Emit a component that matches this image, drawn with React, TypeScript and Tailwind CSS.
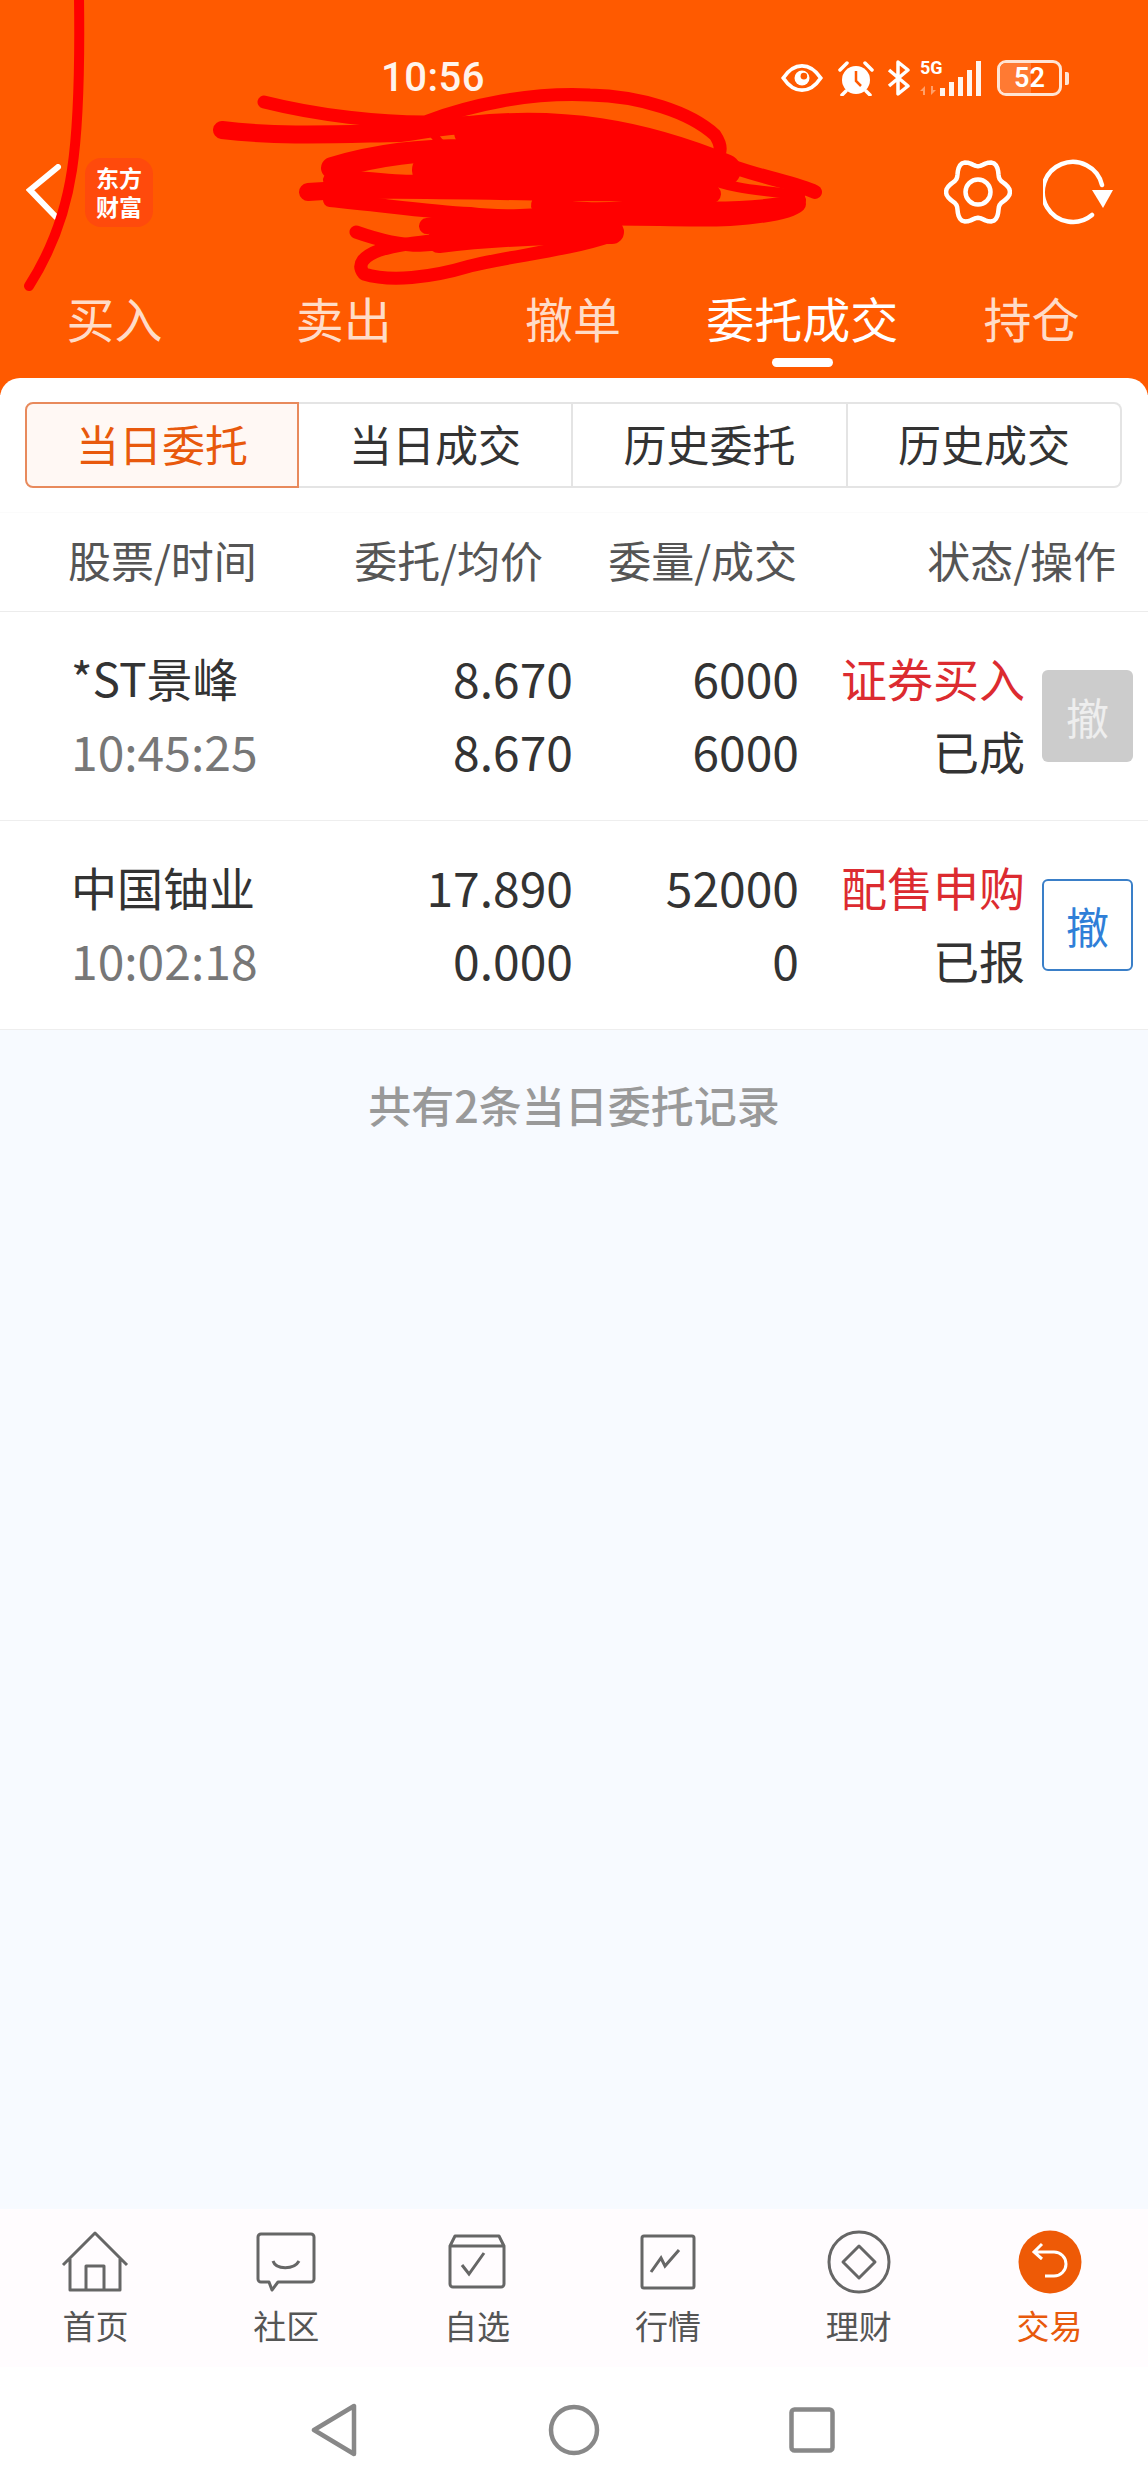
import type { ReactNode } from 'react';

const orders = [
  { name: '*ST景峰', time: '10:45:25', price: '8.670', avg: '8.670', qty: '6000', done: '6000', type: '证券买入', status: '已成', active: false },
  { name: '中国铀业', time: '10:02:18', price: '17.890', avg: '0.000', qty: '52000', done: '0', type: '配售申购', status: '已报', active: true },
];

// six lobed outline of the settings gear
const gearPath =
  Array.from({ length: 72 }, (_, i) => {
    const a = (i / 72) * Math.PI * 2;
    const r = 28.5 + 3.5 * Math.cos(6 * a);
    return `${i === 0 ? 'M' : 'L'}${(34 + r * Math.cos(a)).toFixed(2)} ${(34 - 1.03 * r * Math.sin(a)).toFixed(2)}`;
  }).join('') + 'Z';

function StatusIcons() {
  return (
    <div className="flex items-center">
      {/* eye */}
      <svg width="42" height="30" viewBox="0 0 44 32" fill="none" className="mr-[15px]">
        <path d="M2 16C8 7 15 3 22 3s14 4 20 13c-6 9-13 13-20 13S8 25 2 16Z" stroke="#fff" strokeWidth="4" />
        <circle cx="22" cy="16" r="8" fill="#fff" />
        <circle cx="24" cy="14" r="3.5" fill="#ff5a00" />
      </svg>
      {/* alarm */}
      <svg width="36" height="36" viewBox="0 0 36 36" className="mr-[13px]">
        <circle cx="18" cy="20" r="14" fill="#fff" />
        <path d="M2 10 9 3M34 10 27 3M8 31l-4 4M28 31l4 4" stroke="#fff" strokeWidth="3.5" strokeLinecap="round" />
        <path d="M18 11v10l5 5" stroke="#ff5a00" strokeWidth="2.5" fill="none" />
      </svg>
      {/* bluetooth */}
      <svg width="24" height="36" viewBox="0 0 24 36" fill="none" className="mr-[8px]">
        <path d="M2 10 21 26 11 34V2l10 8L2 26" stroke="#fff" strokeWidth="3.5" strokeLinejoin="round" />
      </svg>
      <div className="relative h-[36px] w-[62px]">
        <span className="absolute left-[1px] top-[-1px] text-[18px] leading-[18px] font-bold text-white font-['Roboto',sans-serif]">5G</span>
        <svg width="16" height="9" viewBox="0 0 16 9" className="absolute left-[1px] top-[26px]">
          <path d="M0 5 5 0v9H3V5ZM16 4l-5 5V0h2v4Z" fill="#ffa06a" />
        </svg>
        <div className="absolute bottom-0 right-0 flex items-end gap-[4px]">
          <div className="h-[8px] w-[5px] bg-[#fff4ec]" />
          <div className="h-[14px] w-[5px] bg-[#fff4ec]" />
          <div className="h-[19px] w-[5px] bg-[#fff4ec]" />
          <div className="h-[26px] w-[5px] bg-[#fff4ec]" />
          <div className="h-[35px] w-[5px] bg-[#fff4ec]" />
        </div>
      </div>
      {/* battery */}
      <div className="relative ml-[16px] flex h-[36px] w-[65px] items-center justify-center overflow-hidden rounded-[9px] border-[3px] border-[#ffe4d4]">
        <div className="absolute inset-y-0 left-0 w-[31px] bg-[#ff7a33]" />
        <span className="relative text-[27px] font-semibold leading-none text-white font-['Roboto',sans-serif]">52</span>
      </div>
      <div className="ml-[3px] h-[13px] w-[4px] rounded-r-[2px] bg-[#ffe4d4]" />
    </div>
  );
}

function Scribble() {
  return (
    <svg width="1148" height="300" viewBox="0 0 1148 300" fill="none" stroke="#ff0000" strokeLinecap="round" strokeLinejoin="round" className="pointer-events-none absolute left-0 top-0">
      <path d="M79 -2C80 70 78 130 72 170C66 210 52 250 29 286" strokeWidth="10" />
      <path d="M264 102C320 116 380 122 425 122C470 105 530 92 590 95C640 96 690 112 715 135C725 150 720 158 705 165" strokeWidth="13" />
      <path d="M222 130C280 137 340 134 400 133C430 130 440 125 470 125" strokeWidth="18" />
      <path d="M425 120C440 150 450 150 470 155" strokeWidth="8" />
      <path d="M470 132C560 122 640 135 725 170" strokeWidth="32" />
      <path d="M332 168C380 154 420 150 468 150C520 146 590 147 695 172" strokeWidth="22" />
      <path d="M690 148C740 175 790 180 815 192" strokeWidth="14" />
      <path d="M430 170C500 165 600 170 700 185" strokeWidth="36" />
      <path d="M330 180C360 174 400 186 430 180" strokeWidth="14" />
      <path d="M308 192C360 188 440 190 560 192C620 192 680 192 712 194" strokeWidth="18" />
      <path d="M700 176C740 192 770 190 800 196" strokeWidth="10" />
      <path d="M330 200C390 206 430 212 470 214C500 218 540 216 570 212" strokeWidth="14" />
      <path d="M540 205C570 212 610 214 650 206" strokeWidth="18" />
      <path d="M650 205C690 208 750 210 800 200" strokeWidth="12" />
      <path d="M427 226C470 222 530 222 580 218C640 216 680 220 730 218C760 216 790 212 798 204" strokeWidth="16" />
      <path d="M356 232C390 244 420 248 440 243" strokeWidth="13" />
      <path d="M439 241C490 235 560 232 612 232" strokeWidth="24" />
      <path d="M610 236C570 250 510 256 470 266C430 278 390 282 364 274C356 264 364 256 380 250C400 244 420 242 440 240" strokeWidth="13" />
    </svg>
  );
}

function NavIcon({ label, active, children }: { label: string; active?: boolean; children: ReactNode }) {
  return (
    <div className="flex flex-col items-center">
      <div className="flex h-[66px] w-[70px] items-center justify-center">{children}</div>
      <span className={`mt-[8px] text-[33px] leading-[44px] ${active ? 'text-[#e8590c]' : 'text-[#555]'}`}>{label}</span>
    </div>
  );
}

export default function App() {
  return (
    <div className="relative flex h-[2492px] w-[1148px] flex-col overflow-hidden bg-white font-['Noto_Sans_CJK_SC','Noto_Sans',sans-serif]">
      {/* header */}
      <div className="h-[395px] shrink-0 bg-[#ff5a00]">
        <div className="mt-[60px] flex h-[36px] items-center justify-between pl-[381px] pr-[79px]">
          <span className="text-[40px] font-medium leading-none tracking-[0.5px] text-[#fff4ec] font-['Roboto',sans-serif]">10:56</span>
          <StatusIcons />
        </div>
        <div className="mt-[54px] flex h-[84px] items-center pl-[26px] pr-[29px]">
          <svg width="36" height="56" viewBox="0 0 36 56" fill="none">
            <path d="M32 3 4 26l26 27" stroke="#fff" strokeWidth="6" strokeLinecap="round" strokeLinejoin="miter" />
          </svg>
          <div className="ml-[23px] flex h-[69px] w-[68px] flex-col items-center justify-center rounded-[16px] bg-[#ff4a0c] text-[23px] font-bold leading-[29px] text-white">
            <span>东方</span>
            <span>财富</span>
          </div>
          <div className="flex-1" />
          <svg width="68" height="68" viewBox="0 0 68 68" fill="none" stroke="#fff" strokeWidth="4.5" strokeLinejoin="round">
            <path d={gearPath} />
            <circle cx="34" cy="34" r="12.5" />
          </svg>
          <svg width="76" height="68" viewBox="0 0 76 68" fill="none" className="ml-[31px]">
            <path d="M49 57A30 30 0 1 1 59 27" stroke="#fff" strokeWidth="4.5" strokeLinecap="round" />
            <path d="M49 32h21L60 50Z" fill="#fff" />
          </svg>
        </div>
        <div className="mt-[53px] grid grid-cols-5 pr-[2px] text-center text-[48px] leading-[60px] text-[#ffdcc8]">
          <span>买入</span>
          <span>卖出</span>
          <span>撤单</span>
          <span className="text-white">委托成交</span>
          <span>持仓</span>
        </div>
        <div className="ml-[772px] mt-[11px] h-[9px] w-[61px] rounded-full bg-white" />
      </div>

      {/* white panel */}
      <div className="mt-[-17px] flex flex-1 flex-col rounded-t-[20px] bg-white">
        <div className="ml-[25px] mt-[24px] grid h-[86px] w-[1097px] grid-cols-[274px_274px_275px_274px] text-center text-[43px] leading-[78px] text-[#333]">
          <div className="rounded-l-[8px] border-2 border-[#e88a5c] bg-[#fff8f4] text-[#e8590c]">当日委托</div>
          <div className="border-y-2 border-r-2 border-[#e4e4e4]">当日成交</div>
          <div className="border-y-2 border-r-2 border-[#e4e4e4]">历史委托</div>
          <div className="rounded-r-[8px] border-y-2 border-r-2 border-[#e4e4e4]">历史成交</div>
        </div>

        <div className="mt-[24px] flex h-[100px] items-center border-y border-t-[#fbfbfb] border-b-[#ececec] pb-[5px] text-[43px] text-[#555]">
          <div className="w-[300px] pl-[68px]">股票/时间</div>
          <div className="w-[243px] text-right">委托/均价</div>
          <div className="w-[254px] text-right">委量/成交</div>
          <div className="w-[319px] text-right">状态/操作</div>
        </div>

        {orders.map((o) => (
          <div key={o.time} className="flex h-[209px] items-center border-b border-[#eeeeee] text-[46px] leading-[73px] text-[#333]">
            <div className="w-[300px] pb-[5px] pl-[71px]">
              <div>{o.name}</div>
              <div className="text-[48px] text-[#777]">{o.time}</div>
            </div>
            <div className="w-[273px] pb-[5px] text-right text-[48px]">
              <div>{o.price}</div>
              <div>{o.avg}</div>
            </div>
            <div className="w-[226px] pb-[5px] text-right text-[48px]">
              <div>{o.qty}</div>
              <div>{o.done}</div>
            </div>
            <div className="w-[226px] pb-[5px] text-right">
              <div className="text-[#dc2b30]">{o.type}</div>
              <div>{o.status}</div>
            </div>
            <button
              className={`ml-[17px] flex h-[92px] w-[91px] items-center justify-center rounded-[6px] text-[43px] ${
                o.active ? 'border-2 border-[#3a7fc8] bg-white text-[#2f7fd8]' : 'bg-[#cccccc] text-[#eeeeee]'
              }`}
            >
              撤
            </button>
          </div>
        ))}

        <div className="flex-1 bg-[#f7faff] pt-[44px] text-center text-[43px] font-medium leading-[60px] text-[#999999]">
          共有2条当日委托记录
        </div>

        {/* bottom tabs */}
        <div className="grid h-[158px] grid-cols-6 bg-[#fffcfe] pr-[3px] pt-[20px]">
          <NavIcon label="首页">
            <svg width="68" height="62" viewBox="0 0 68 62" fill="none" stroke="#666" strokeWidth="3">
              <path d="M2 34 34 2l32 32M9 28v31h50V28M25 59V35h18v24" strokeLinejoin="round" />
            </svg>
          </NavIcon>
          <NavIcon label="社区">
            <svg width="60" height="60" viewBox="0 0 60 60" fill="none" stroke="#666" strokeWidth="3">
              <path d="M5 2h50a3 3 0 0 1 3 3v42a3 3 0 0 1-3 3H22l-6 8-3-8H5a3 3 0 0 1-3-3V5a3 3 0 0 1 3-3Z" strokeLinejoin="round" />
              <path d="M17 29c3 9 21 9 26 0" strokeWidth="3" />
            </svg>
          </NavIcon>
          <NavIcon label="自选">
            <svg width="58" height="56" viewBox="0 0 58 56" fill="none" stroke="#666" strokeWidth="3">
              <path d="M2 12 7 2h44l5 10v38a3 3 0 0 1-3 3H5a3 3 0 0 1-3-3ZM2 12h54" strokeLinejoin="round" />
              <path d="M14 31l7 9 15-21" />
            </svg>
          </NavIcon>
          <NavIcon label="行情">
            <svg width="56" height="56" viewBox="0 0 56 56" fill="none" stroke="#666" strokeWidth="3">
              <rect x="2" y="2" width="52" height="52" rx="2" />
              <path d="M11 38l10-14 4 8 14-16" />
            </svg>
          </NavIcon>
          <NavIcon label="理财">
            <svg width="64" height="64" viewBox="0 0 64 64" fill="none" stroke="#666" strokeWidth="3">
              <circle cx="32" cy="32" r="30" />
              <path d="M32 16 48 32 32 48 16 32Z" strokeLinejoin="round" />
            </svg>
          </NavIcon>
          <NavIcon label="交易" active>
            <svg width="64" height="64" viewBox="0 0 64 64" fill="none">
              <circle cx="32" cy="32" r="31.5" fill="#ee5a06" />
              <path d="M24 14l-8 8 8 7M16 22h20a11 11 0 0 1 0 24h-9" stroke="#fff" strokeWidth="3" />
            </svg>
          </NavIcon>
        </div>

        {/* android nav */}
        <div className="flex h-[125px] items-center justify-center bg-white pr-[3px]">
          <svg width="46" height="54" viewBox="0 0 46 54" fill="none" stroke="#888" strokeWidth="4.5" className="mr-[191px]">
            <path d="M43 3v48L3 27Z" strokeLinejoin="round" />
          </svg>
          <svg width="52" height="52" viewBox="0 0 52 52" fill="none" stroke="#888" strokeWidth="4.5" className="mr-[189px]">
            <circle cx="26" cy="26" r="23" />
          </svg>
          <svg width="46" height="46" viewBox="0 0 46 46" fill="none" stroke="#888" strokeWidth="4.5">
            <rect x="2.5" y="2.5" width="41" height="41" rx="3" />
          </svg>
        </div>
      </div>

      <Scribble />
    </div>
  );
}
